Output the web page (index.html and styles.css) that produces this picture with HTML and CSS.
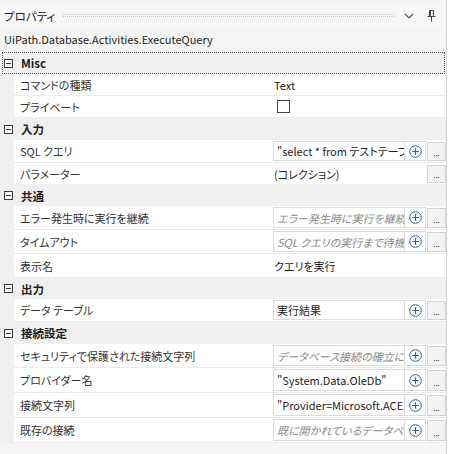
FILE: index.html
```html
<!DOCTYPE html>
<html lang="ja">
<head>
<meta charset="utf-8">
<link rel="stylesheet" href="styles.css">
</head>
<body>
<div class="panel">
  <div class="titlebar">
    <span class="title">プロパティ</span>
    <span class="grip"></span>
    <svg class="chev" width="10" height="6" viewBox="0 0 10 6"><path d="M1 1 L5 5 L9 1" fill="none" stroke="#555" stroke-width="1.2"/></svg>
    <svg class="pin" width="9" height="12" viewBox="0 0 9 12"><path d="M2.5 0.5 H6.5 V6.5 H2.5 Z M3.5 1 V6 M0.5 6.5 H8.5 M4.5 6.5 V11.5" fill="none" stroke="#444" stroke-width="1"/></svg>
  </div>
  <div class="desc">UiPath.Database.Activities.ExecuteQuery</div>
  <div class="grid">
    <div class="cat h22 focus"><span class="toggle"></span><span class="cat-label">Misc</span></div>
    <div class="prop h22"><div class="name">コマンドの種類</div><div class="val"><span class="plain">Text</span></div></div>
    <div class="prop h22"><div class="name">プライベート</div><div class="val"><span class="check"></span></div></div>

    <div class="cat h22"><span class="toggle"></span><span class="cat-label">入力</span></div>
    <div class="prop h23"><div class="name">SQL クエリ</div><div class="val"><div class="editor"><span class="tb">"select * from テストテーブル"</span><span class="plus"><svg width="13" height="13" viewBox="0 0 13 13"><circle cx="6.5" cy="6.5" r="5.8" fill="none" stroke="#2f5f97" stroke-width="1"/><path d="M6.5 3.3 V9.7 M3.3 6.5 H9.7" stroke="#2f5f97" stroke-width="1"/></svg></span></div><span class="dots">...</span></div></div>
    <div class="prop h22"><div class="name">パラメーター</div><div class="val"><span class="plain grow">(コレクション)</span><span class="dots">...</span></div></div>

    <div class="cat h21"><span class="toggle"></span><span class="cat-label">共通</span></div>
    <div class="prop h24"><div class="name">エラー発生時に実行を継続</div><div class="val"><div class="editor"><span class="tb ph">エラー発生時に実行を継続します</span><span class="plus"><svg width="13" height="13" viewBox="0 0 13 13"><circle cx="6.5" cy="6.5" r="5.8" fill="none" stroke="#2f5f97" stroke-width="1"/><path d="M6.5 3.3 V9.7 M3.3 6.5 H9.7" stroke="#2f5f97" stroke-width="1"/></svg></span></div><span class="dots">...</span></div></div>
    <div class="prop h24"><div class="name">タイムアウト</div><div class="val"><div class="editor"><span class="tb ph">SQL クエリの実行まで待機する時間</span><span class="plus"><svg width="13" height="13" viewBox="0 0 13 13"><circle cx="6.5" cy="6.5" r="5.8" fill="none" stroke="#2f5f97" stroke-width="1"/><path d="M6.5 3.3 V9.7 M3.3 6.5 H9.7" stroke="#2f5f97" stroke-width="1"/></svg></span></div><span class="dots">...</span></div></div>
    <div class="prop h24"><div class="name">表示名</div><div class="val"><span class="plain">クエリを実行</span></div></div>

    <div class="cat h21"><span class="toggle"></span><span class="cat-label">出力</span></div>
    <div class="prop h23"><div class="name">データ テーブル</div><div class="val"><div class="editor"><span class="tb">実行結果</span><span class="plus"><svg width="13" height="13" viewBox="0 0 13 13"><circle cx="6.5" cy="6.5" r="5.8" fill="none" stroke="#2f5f97" stroke-width="1"/><path d="M6.5 3.3 V9.7 M3.3 6.5 H9.7" stroke="#2f5f97" stroke-width="1"/></svg></span></div><span class="dots">...</span></div></div>

    <div class="cat h22"><span class="toggle"></span><span class="cat-label">接続設定</span></div>
    <div class="prop h24"><div class="name">セキュリティで保護された接続文字列</div><div class="val"><div class="editor"><span class="tb ph">データベース接続の確立に使用する接続文字列</span><span class="plus"><svg width="13" height="13" viewBox="0 0 13 13"><circle cx="6.5" cy="6.5" r="5.8" fill="none" stroke="#2f5f97" stroke-width="1"/><path d="M6.5 3.3 V9.7 M3.3 6.5 H9.7" stroke="#2f5f97" stroke-width="1"/></svg></span></div><span class="dots">...</span></div></div>
    <div class="prop h25"><div class="name">プロバイダー名</div><div class="val"><div class="editor"><span class="tb">"System.Data.OleDb"</span><span class="plus"><svg width="13" height="13" viewBox="0 0 13 13"><circle cx="6.5" cy="6.5" r="5.8" fill="none" stroke="#2f5f97" stroke-width="1"/><path d="M6.5 3.3 V9.7 M3.3 6.5 H9.7" stroke="#2f5f97" stroke-width="1"/></svg></span></div><span class="dots">...</span></div></div>
    <div class="prop h25"><div class="name">接続文字列</div><div class="val"><div class="editor"><span class="tb">"Provider=Microsoft.ACE.OLEDB.12.0"</span><span class="plus"><svg width="13" height="13" viewBox="0 0 13 13"><circle cx="6.5" cy="6.5" r="5.8" fill="none" stroke="#2f5f97" stroke-width="1"/><path d="M6.5 3.3 V9.7 M3.3 6.5 H9.7" stroke="#2f5f97" stroke-width="1"/></svg></span></div><span class="dots">...</span></div></div>
    <div class="prop h25"><div class="name">既存の接続</div><div class="val"><div class="editor"><span class="tb ph">既に開かれているデータベース接続</span><span class="plus"><svg width="13" height="13" viewBox="0 0 13 13"><circle cx="6.5" cy="6.5" r="5.8" fill="none" stroke="#2f5f97" stroke-width="1"/><path d="M6.5 3.3 V9.7 M3.3 6.5 H9.7" stroke="#2f5f97" stroke-width="1"/></svg></span></div><span class="dots">...</span></div></div>
  </div>
</div>
</body>
</html>
```

FILE: styles.css
```css
html, body {
  margin: 0;
  padding: 0;
  background: #ffffff;
}
body {
  font-family: "Noto Sans CJK JP", "Noto Sans", sans-serif;
  font-size: 11px;
  color: #1e1e1e;
  font-feature-settings: "palt";
}
.panel {
  width: 447px;
  height: 454px;
  background: #f5f5f5;
  border-right: 1px solid #d4d4d4;
  box-sizing: border-box;
  padding-top: 3px;
  display: flex;
  flex-direction: column;
}
.titlebar {
  height: 25px;
  display: flex;
  align-items: center;
  padding-left: 4px;
  padding-right: 10px;
  background: #f7f7f7;
}
.title {
  font-size: 11.5px;
  color: #222;
}
.grip {
  flex: 1;
  height: 1px;
  margin: 0 10px 0 8px;
  border-top: 1px dotted #c4c4c4;
  border-bottom: 1px dotted #c4c4c4;
}
.chev {
  margin-right: 13px;
}
.pin {
  margin-right: 0;
}
.desc {
  height: 22px;
  display: flex;
  align-items: center;
  padding-left: 4px;
  font-size: 11px;
  color: #1e1e1e;
  margin-bottom: 2px;
}
.grid {
  display: flex;
  flex-direction: column;
}
.h21 { height: 21px; }
.h22 { height: 22px; }
.h23 { height: 23px; }
.h24 { height: 24px; }
.h25 { height: 25px; }
.cat {
  display: flex;
  align-items: center;
  background: #f0f0f0;
  padding-left: 4px;
  box-sizing: border-box;
}
.focus {
  outline: 1px dotted #555;
  outline-offset: -1px;
  margin: 0 1px 0 2px;
  padding-left: 2px;
}
.toggle {
  width: 7px;
  height: 7px;
  border: 1px solid #3a3a3a;
  position: relative;
  margin-right: 8px;
  background: #fff;
}
.toggle::after {
  content: "";
  position: absolute;
  left: 1px;
  top: 3px;
  width: 5px;
  height: 1px;
  background: #3a3a3a;
}
.cat-label {
  font-weight: bold;
  color: #1e1e1e;
  font-size: 11.5px;
}
.prop {
  display: flex;
  padding-left: 14px;
  background: #f0f0f0;
  box-sizing: border-box;
}
.name {
  width: 258px;
  box-sizing: border-box;
  padding-left: 6px;
  background: #fff;
  border-bottom: 1px solid #ececec;
  display: flex;
  align-items: center;
  white-space: nowrap;
  color: #333;
}
.val {
  flex: 1;
  min-width: 0;
  background: #fff;
  border-bottom: 1px solid #ececec;
  display: flex;
  align-items: center;
  padding-left: 1px;
  padding-right: 0;
}
.plain {
  padding-left: 1px;
  white-space: nowrap;
}
.grow {
  flex: 1;
}
.check {
  width: 11px;
  height: 11px;
  border: 1px solid #444;
  margin-left: 4px;
  background: #fff;
}
.editor {
  display: flex;
  height: calc(100% - 2px);
  width: 153px;
  border: 1px solid #dcdcdc;
  box-sizing: border-box;
  background: #fff;
}
.tb {
  width: 131px;
  overflow: hidden;
  white-space: nowrap;
  padding-left: 3px;
  box-sizing: border-box;
  display: flex;
  align-items: center;
  border-right: 1px solid #dcdcdc;
}
.ph {
  font-style: italic;
  color: #8a8a8a;
}
.plus {
  flex: 1;
  display: flex;
  align-items: center;
  justify-content: center;
}
.dots {
  width: 19px;
  height: calc(100% - 3px);
  margin-left: 1px;
  box-sizing: border-box;
  border: 1px solid #d4d4d4;
  background: #f3f3f3;
  font-size: 8px;
  color: #333;
  display: flex;
  align-items: flex-end;
  justify-content: center;
  line-height: 10px;
  padding-bottom: 2px;
}
```
